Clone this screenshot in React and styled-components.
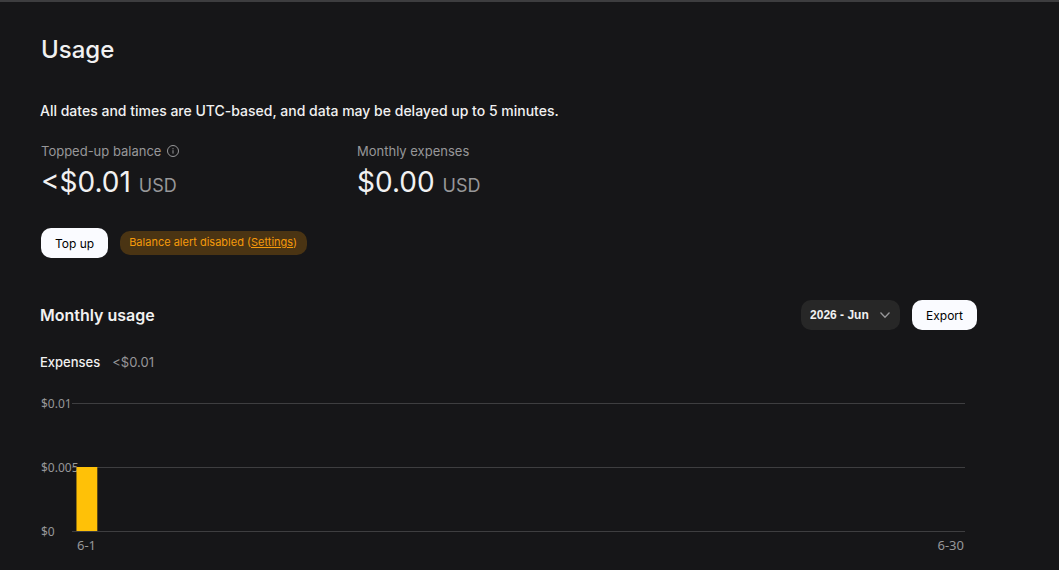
import React, { useState } from "react";
import styled, { createGlobalStyle } from "styled-components";

const GlobalStyle = createGlobalStyle`
  * {
    box-sizing: border-box;
  }

  body {
    margin: 0;
    background-color: #161618;
    color: #f1f1f1;
    font-family: Inter, "Liberation Sans", sans-serif;
    font-size: 13px;
    line-height: 20px;
  }

  h1, h2, h3, p, dl, dd {
    margin: 0;
  }
`;

const Page = styled.main`
  min-height: 100vh;
  border-top: 2px solid #3d3d3f;
  padding: 32px 82px 12px 40px;
`;

const Title = styled.h1`
  padding-left: 1px;
  font-size: 24px;
  font-weight: 500;
  line-height: 32px;
`;

const Notice = styled.p`
  margin-top: 34px;
  font-size: 14px;
  font-weight: 500;
  line-height: 22px;
`;

const Stats = styled.dl`
  display: flex;
  margin-top: 19px;
  padding-left: 1px;
`;

const Stat = styled.div`
  flex: 0 0 316px;
`;

const StatLabel = styled.dt`
  display: flex;
  align-items: center;
  gap: 6px;
  color: #979799;
`;

const StatValue = styled.dd`
  display: flex;
  align-items: baseline;
  gap: 8px;
  font-size: 28px;
  line-height: 42px;
`;

const Currency = styled.span`
  color: #979799;
  font-size: 18px;
`;

const Actions = styled.div`
  display: flex;
  align-items: center;
  gap: 12px;
  margin-top: 21px;
  padding-left: 1px;
`;

const Button = styled.button`
  height: 30px;
  padding: 1px 14px 0;
  border: none;
  border-radius: 10px;
  background-color: #fafbff;
  color: #000000;
  font-family: inherit;
  font-size: 12px;
  cursor: pointer;
`;

const AlertTag = styled.span`
  height: 24px;
  padding: 0 10px 0 9px;
  border-radius: 10px;
  background-color: #4a3413;
  color: #f59a0b;
  font-size: 11px;
  line-height: 22px;

  a {
    color: inherit;
  }
`;

const SectionHeader = styled.div`
  display: flex;
  align-items: center;
  gap: 12px;
  margin-top: 42px;
`;

const SectionTitle = styled.h2`
  flex: 1;
  font-size: 16px;
  font-weight: 600;
  line-height: 24px;
`;

const SelectBox = styled.div`
  display: grid;
  align-items: center;
  height: 30px;
  border-radius: 10px;
  background-color: #272727;

  > * {
    grid-area: 1 / 1;
  }

  svg {
    justify-self: end;
    margin-right: 9px;
    pointer-events: none;
  }
`;

const MonthSelect = styled.select`
  appearance: none;
  width: 99px;
  height: 30px;
  padding: 0 26px 0 9px;
  border: none;
  border-radius: 10px;
  background: transparent;
  color: #f1f1f1;
  font-family: "Liberation Sans", Arial, sans-serif;
  font-size: 12px;
  font-weight: 600;
`;

const ChartHeader = styled.div`
  display: flex;
  gap: 12px;
  margin-top: 22px;
`;

const ChartTitle = styled.h3`
  font-size: 13px;
  font-weight: 500;
`;

const ChartTotal = styled.span`
  color: #979799;
`;

const Chart = styled.div`
  display: grid;
  grid-template-columns: 31px 1fr;
  margin-top: 23px;
  padding: 0 12px 0 1px;
  color: #979799;
  font-family: "Noto Sans", sans-serif;
  font-size: 12px;
  line-height: 18px;
`;

const YAxis = styled.div`
  display: flex;
  flex-direction: column;
  justify-content: space-between;
  height: 146px;
  white-space: nowrap;
`;

const Plot = styled.svg`
  display: block;
  width: 100%;
  height: 129px;
  margin-top: 8px;
  z-index: 1;
`;

const XAxis = styled.div`
  grid-column: 2;
  display: flex;
  justify-content: space-between;
  margin-top: -5px;
  padding: 0 1px 0 5px;
  font-size: 13px;
`;

const ticks = ["$0.01", "$0.005", "$0"];
const bars = [{ day: 1, height: 64 }];
const daysInMonth = 30;

const InfoIcon = () => (
  <svg width="12" height="12" viewBox="0 0 12 12" fill="none" stroke="#979799">
    <circle cx="6" cy="6" r="5.5" />
    <path d="M6 5.2v3.4M6 3.2v1.1" />
  </svg>
);

const ChevronIcon = () => (
  <svg width="12" height="12" viewBox="0 0 12 12" fill="none">
    <path d="M1.5 3.5 6 8.2l4.5-4.7" stroke="#979799" strokeWidth="1.3" />
  </svg>
);

const UsageChart = () => (
  <Chart>
    <YAxis>
      {ticks.map((tick) => (
        <span key={tick}>{tick}</span>
      ))}
    </YAxis>
    <Plot role="img" aria-label="Daily expenses">
      {[0, 64, 128].map((y) => (
        <rect key={y} y={y} width="100%" height="1" fill="#3e3e40" />
      ))}
      {bars.map(({ day, height }) => (
        <rect
          key={day}
          x={`${((day - 1 + 0.15) * 100) / daysInMonth}%`}
          y={128 - height}
          width={`${70 / daysInMonth}%`}
          height={height}
          fill="#ffc107"
        />
      ))}
    </Plot>
    <XAxis>
      <span>6-1</span>
      <span>6-30</span>
    </XAxis>
  </Chart>
);

const App = () => {
  const [month, setMonth] = useState("2026-06");

  return (
    <Page>
      <GlobalStyle />
      <Title>Usage</Title>
      <Notice>
        All dates and times are UTC-based, and data may be delayed up to 5
        minutes.
      </Notice>
      <Stats>
        <Stat>
          <StatLabel>
            Topped-up balance <InfoIcon />
          </StatLabel>
          <StatValue>
            {"<$0.01"} <Currency>USD</Currency>
          </StatValue>
        </Stat>
        <Stat>
          <StatLabel>Monthly expenses</StatLabel>
          <StatValue>
            $0.00 <Currency>USD</Currency>
          </StatValue>
        </Stat>
      </Stats>
      <Actions>
        <Button type="button">Top up</Button>
        <AlertTag>
          Balance alert disabled (<a href="#settings">Settings</a>)
        </AlertTag>
      </Actions>
      <SectionHeader>
        <SectionTitle>Monthly usage</SectionTitle>
        <SelectBox>
          <MonthSelect
            aria-label="Month"
            value={month}
            onChange={(e) => setMonth(e.target.value)}
          >
            <option value="2026-06">2026 - Jun</option>
            <option value="2026-05">2026 - May</option>
          </MonthSelect>
          <ChevronIcon />
        </SelectBox>
        <Button type="button">Export</Button>
      </SectionHeader>
      <ChartHeader>
        <ChartTitle>Expenses</ChartTitle>
        <ChartTotal>{"<$0.01"}</ChartTotal>
      </ChartHeader>
      <UsageChart />
    </Page>
  );
};

export default App;
